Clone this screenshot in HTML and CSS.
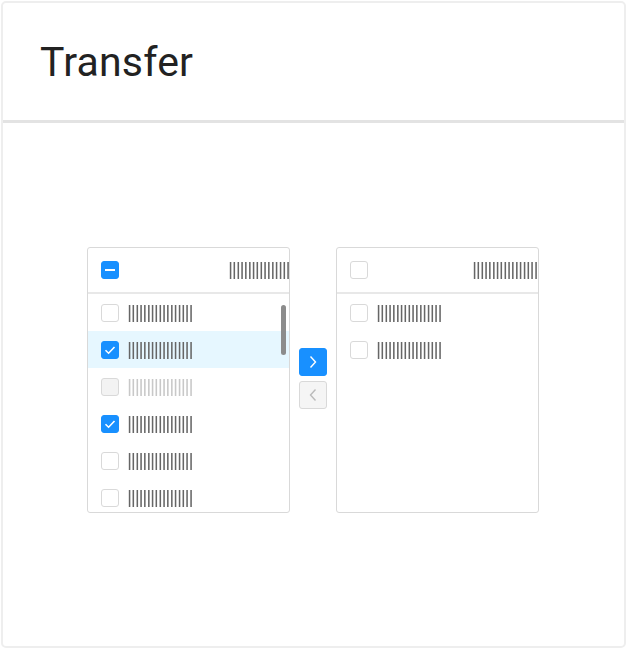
FILE: index.html
```html
<!DOCTYPE html>
<html>
<head>
<meta charset="utf-8">
<link rel="stylesheet" href="styles.css">
</head>
<body>
<div class="card">
  <div class="card-head"><h1 class="title">Transfer</h1></div>
  <div class="card-body">
    <div class="transfer">
      <div class="panel panel-left">
        <div class="panel-head">
          <span class="cb cb-ind"><span class="dash"></span></span>
          <span class="bars head-bars-left">||||||||||||||||||</span>
        </div>
        <div class="panel-list">
          <div class="item"><span class="cb"></span><span class="bars">|||||||||||||||||</span></div>
          <div class="item item-sel"><span class="cb cb-on"><svg viewBox="0 0 18 18" width="18" height="18"><path d="M4.5 9.2 L7.6 12.2 L13.5 6" fill="none" stroke="#fff" stroke-width="1.6"/></svg></span><span class="bars">|||||||||||||||||</span></div>
          <div class="item"><span class="cb cb-dis"></span><span class="bars bars-dis">|||||||||||||||||</span></div>
          <div class="item"><span class="cb cb-on"><svg viewBox="0 0 18 18" width="18" height="18"><path d="M4.5 9.2 L7.6 12.2 L13.5 6" fill="none" stroke="#fff" stroke-width="1.6"/></svg></span><span class="bars">|||||||||||||||||</span></div>
          <div class="item"><span class="cb"></span><span class="bars">|||||||||||||||||</span></div>
          <div class="item"><span class="cb"></span><span class="bars">|||||||||||||||||</span></div>
          <div class="scrollbar"></div>
        </div>
      </div>
      <div class="ops">
        <span class="op op-on"><svg viewBox="0 0 28 28" width="28" height="28"><path d="M11.5 8.5 L16.5 14 L11.5 19.5" fill="none" stroke="#fff" stroke-width="1.4"/></svg></span>
        <span class="op op-off"><svg viewBox="0 0 28 28" width="28" height="28"><path d="M16.5 8.5 L11.5 14 L16.5 19.5" fill="none" stroke="#bbb" stroke-width="1.4"/></svg></span>
      </div>
      <div class="panel panel-right">
        <div class="panel-head">
          <span class="cb"></span>
          <span class="bars head-bars-right">|||||||||||||||||</span>
        </div>
        <div class="panel-list">
          <div class="item"><span class="cb"></span><span class="bars">|||||||||||||||||</span></div>
          <div class="item"><span class="cb"></span><span class="bars">|||||||||||||||||</span></div>
        </div>
      </div>
    </div>
  </div>
</div>
</body>
</html>
```
FILE: styles.css
```css
html, body {
  margin: 0;
  padding: 0;
  background: #fff;
}
body {
  font-family: Roboto, "Liberation Sans", sans-serif;
}
.card {
  margin: 1px;
  width: 621px;
  height: 643px;
  border: 2px solid #eeeeee;
  border-radius: 5px;
  display: flex;
  flex-direction: column;
  overflow: hidden;
}
.card-head {
  height: 117px;
  border-bottom: 3px solid #e3e3e3;
  display: flex;
  align-items: center;
  padding-left: 37px;
}
.title {
  margin: 0;
  font-size: 41px;
  font-weight: 400;
  color: #222;
  letter-spacing: 0.2px;
}
.card-body {
  flex: 1;
  padding-top: 124px;
  padding-left: 84px;
}
.transfer {
  display: flex;
  align-items: center;
}
.panel {
  width: 201px;
  height: 264px;
  border: 1px solid #d9d9d9;
  border-radius: 3px;
  overflow: hidden;
  display: flex;
  flex-direction: column;
}
.panel-head {
  height: 44px;
  border-bottom: 2px solid #e8e8e8;
  display: flex;
  align-items: center;
  padding-left: 13px;
  flex-shrink: 0;
}
.panel-list {
  position: relative;
  flex: 1;
  overflow: hidden;
}
.item {
  height: 37px;
  display: flex;
  align-items: center;
  padding-left: 13px;
}
.item-sel {
  background: #e6f7ff;
}
.cb {
  width: 16px;
  height: 16px;
  border: 1px solid #d9d9d9;
  border-radius: 3px;
  background: #fff;
  display: flex;
  align-items: center;
  justify-content: center;
  flex-shrink: 0;
  position: relative;
}
.cb svg {
  position: absolute;
  left: -1px;
  top: -1px;
}
.cb-on, .cb-ind {
  background: #1890ff;
  border-color: #1890ff;
}
.cb-dis {
  background: #f3f3f3;
}
.dash {
  width: 10px;
  height: 2px;
  background: #fff;
}
.bars {
  font-size: 21px;
  line-height: 24px;
  color: #666;
  margin-left: 8px;
  white-space: nowrap;
  letter-spacing: -1.29px;
  will-change: transform;
}
.bars-dis {
  color: #c8c8c8;
}
.head-bars-left {
  margin-left: 109px;
}
.head-bars-right {
  margin-left: 104px;
}
.scrollbar {
  position: absolute;
  right: 3px;
  top: 11px;
  width: 5px;
  height: 50px;
  border-radius: 3px;
  background: #8c8c8c;
}
.ops {
  display: flex;
  flex-direction: column;
  gap: 5px;
  padding: 0 9px;
  margin-top: -4px;
}
.op {
  width: 26px;
  height: 26px;
  border: 1px solid #1890ff;
  border-radius: 3px;
  position: relative;
  display: block;
}
.op svg {
  position: absolute;
  left: -1px;
  top: -1px;
}
.op-on {
  background: #1890ff;
}
.op-off {
  background: #f5f5f5;
  border-color: #d9d9d9;
}
```
